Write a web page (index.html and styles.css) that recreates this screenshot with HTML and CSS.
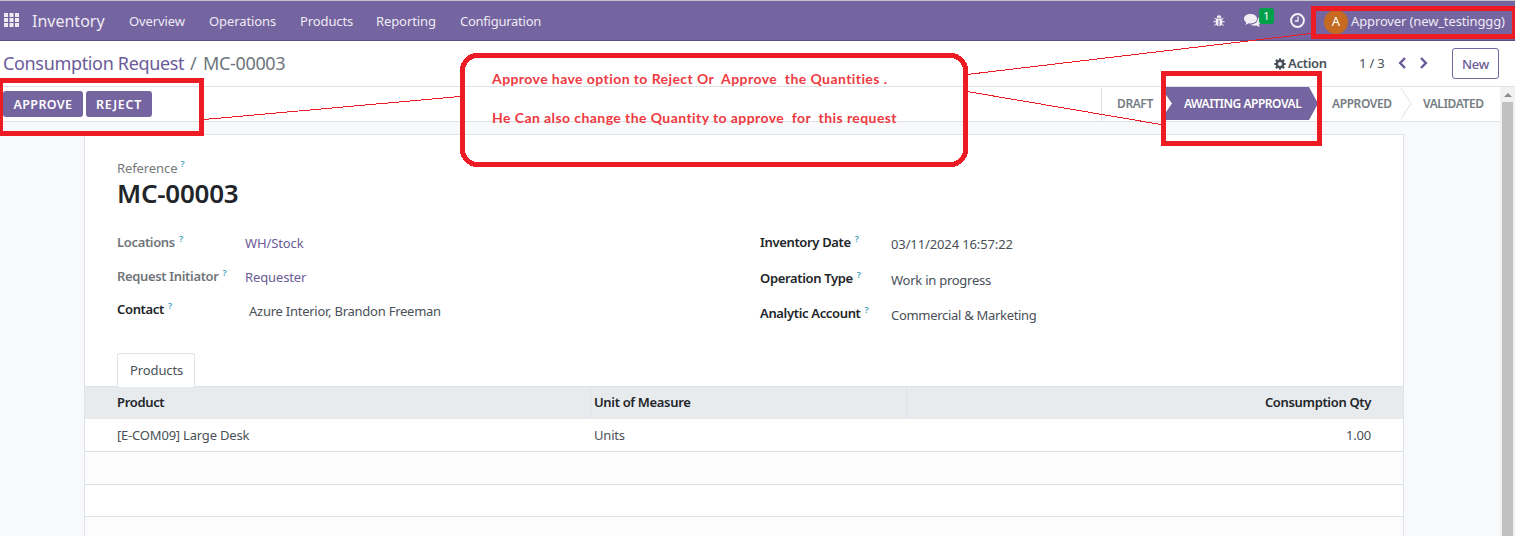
FILE: index.html
```html
<!DOCTYPE html>
<html lang="en">
<head>
<meta charset="utf-8">
<title>Consumption Request / MC-00003</title>
<link rel="stylesheet" href="styles.css">
</head>
<body>
<header class="navbar">
  <svg class="apps" width="15" height="14" viewBox="0 0 15 14"><path fill="#eeebf3" d="M0 0h4v4H0zM5.5 0h4v4h-4zM11 0h4v4h-4zM0 5h4v4H0zM5.5 5h4v4h-4zM11 5h4v4h-4zM0 10h4v4H0zM5.5 10h4v4h-4zM11 10h4v4h-4z"/></svg>
  <span class="brand">Inventory</span>
  <nav class="menu">
    <span class="m-over">Overview</span><span class="m-oper">Operations</span><span class="m-prod">Products</span><span class="m-rep">Reporting</span><span class="m-conf">Configuration</span>
  </nav>
  <div class="systray">
    <svg class="bug" width="12" height="12" viewBox="0 0 12 12"><path fill="#f3f0f7" d="M3.6 2.7a2.4 2.4 0 0 1 4.8 0zM2.8 3.5h6.4v5.2q-.4 2.2-2.7 2.5V5h-1v6.200Q3.200 10.900 2.800 8.700z"/><path fill="none" stroke="#f3f0f7" d="M3.300 4.800 1.400 2.800M8.700 4.800l1.900-2M3 6.700H.3M9 6.700h2.700M3.300 8.500l-2 2.200M8.700 8.500l2 2.200"/></svg>
    <svg class="chat" width="17" height="14" viewBox="0 0 17 14"><path fill="#f0edf4" d="M6.500 0C10.200 0 13 2 13 4.700S10.200 9.400 6.500 9.400q-1 0-1.800-.2-1.600 1.300-3.700 1.500 1.200-1 1.300-2.300C.9 7.500 0 6.200 0 4.700 0 2 2.800 0 6.500 0zM14 3.400c1.800.8 3 2.200 3 3.900 0 1.400-.8 2.600-2.200 3.500q.1 1.400 1.300 2.200-2.200-.1-3.700-1.400-3.700.6-6.200-1.200C10.800 10.500 14.200 8 14 3.400z"/></svg>
    <span class="badge">1</span>
    <svg class="clock" width="15" height="15" viewBox="0 0 15 15"><circle cx="7.500" cy="7.500" r="6.400" fill="none" stroke="#f3f0f7" stroke-width="2"/><path fill="none" stroke="#f3f0f7" stroke-width="1.300" d="M8 3.500V8H4.800"/></svg>
    <span class="avatar">A</span>
    <span class="user">Approver (new_testinggg)</span>
  </div>
</header>

<section class="control">
  <div class="crumbs"><span class="crumb-link">Consumption Request</span><span class="slash">/</span><span class="crumb-now">MC-00003</span></div>
  <div class="actions">
    <svg class="gear" width="12" height="12" viewBox="0 0 12 12"><circle cx="6" cy="6" r="3.100" fill="none" stroke="#495057" stroke-width="2.400"/><path stroke="#495057" stroke-width="2.200" d="M6 .3v2M6 9.700v2M.3 6h2M9.700 6h2M1.900 1.900l1.500 1.500M8.600 8.600l1.500 1.500M1.900 10.100l1.500-1.500M8.600 3.400l1.500-1.500"/></svg>
    <span class="action-label">Action</span>
    <span class="pager">1 / 3</span>
    <svg class="prev" width="9" height="12" viewBox="0 0 9 12"><path d="M7 1 2.200 6 7 11"/></svg>
    <svg class="next" width="9" height="12" viewBox="0 0 9 12"><path d="m2 1 4.800 5L2 11"/></svg>
    <button class="new">New</button>
  </div>
</section>

<div class="view">
  <main class="content">
    <section class="statusbar">
      <button class="primary approve">APPROVE</button>
      <button class="primary reject">REJECT</button>
      <div class="stages">
        <span class="stage draft">DRAFT</span>
        <span class="stage current">AWAITING APPROVAL</span>
        <span class="stage approved">APPROVED</span>
        <svg class="divider" width="12" height="33" viewBox="0 0 12 33"><path fill="none" stroke="#dee2e6" d="M1 1 11 16.500 1 32"/></svg>
        <span class="stage validated">VALIDATED</span>
      </div>
    </section>
    <article class="sheet">
      <div class="ref-label"><span>Reference</span><sup>?</sup></div>
      <h1>MC-00003</h1>
      <div class="groups">
        <dl class="group left">
          <dt class="muted loc"><span>Locations</span><sup>?</sup></dt><dd class="link wh">WH/Stock</dd>
          <dt class="muted init"><span>Request Initiator</span><sup>?</sup></dt><dd class="link reqr">Requester</dd>
          <dt class="cont"><span>Contact</span><sup>?</sup></dt><dd class="azure">Azure Interior, Brandon Freeman</dd>
        </dl>
        <dl class="group right">
          <dt class="invd"><span>Inventory Date</span><sup>?</sup></dt><dd class="date">03/11/2024 16:57:22</dd>
          <dt class="opt"><span>Operation Type</span><sup>?</sup></dt><dd class="work">Work in progress</dd>
          <dt class="ana"><span>Analytic Account</span><sup>?</sup></dt><dd class="comm">Commercial &amp; Marketing</dd>
        </dl>
      </div>
      <div class="tabs"><span class="tab">Products</span></div>
      <div class="table">
        <div class="tr head"><span class="h-prod">Product</span><span class="h-uom">Unit of Measure</span><span class="h-qty">Consumption Qty</span></div>
        <div class="tr row"><span class="c-prod">[E-COM09] Large Desk</span><span class="c-uom">Units</span><span class="c-qty">1.00</span></div>
        <div class="tr blank shade"></div>
        <div class="tr blank short"></div>
        <div class="tr blank shade"></div>
      </div>
    </article>
  </main>
  <aside class="scrollbar"><i class="up"></i><i class="thumb"></i></aside>
</div>

<svg class="marks" width="1515" height="536" viewBox="0 0 1515 536" shape-rendering="crispEdges">
  <g fill="none" stroke="#ed1c24" stroke-width="5">
    <rect x=".5" y="80.500" width="201" height="53"/>
    <rect x="1313.500" y="8.500" width="200.500" height="28"/>
    <rect x="1163.500" y="73.500" width="156" height="70"/>
    <rect x="462.500" y="55.500" width="503" height="109" rx="15"/>
  </g>
  <path fill="none" stroke="#ed1c24" d="M204 119.500 460 96.500M967 74.500 1311 33.500M967 91.500l194 33"/>
</svg>
<div class="note"><p class="n1">Approve have option to Reject Or&nbsp; Approve&nbsp; the Quantities .</p><p class="n2">He Can also change the Quantity to approve&nbsp; for&nbsp; this request</p></div>
</body>
</html>
```
FILE: styles.css
```css
* { box-sizing: border-box; }
body { margin: 0; width: 1515px; height: 536px; overflow: hidden; position: relative; background: #fff; color: #495057; font: 13px/20px "Noto Sans", "Open Sans", sans-serif; display: flex; flex-direction: column; white-space: nowrap; }
p, h1, dl, dd { margin: 0; }
button { font: inherit; padding: 0; border: 0; display: block; }
svg { display: block; flex: none; }
span { flex: none; }

.navbar { height: 41px; flex: none; display: flex; align-items: flex-start; background: #74649f; border-top: 1px solid #c4c2cb; border-bottom: 1px solid #5c4d80; color: #eeebf4; padding: 0 0 0 4px; }
.apps { margin: 12px 13px 0 0; }
.brand { width: 97px; font-size: 16px; line-height: 24px; margin-top: 8px; }
.menu { display: grid; grid-template-columns: 80px 91px 76px 84px 90px; margin-top: 10px; letter-spacing: -.1px; }
.m-conf { letter-spacing: -.25px; }
.systray { margin-left: auto; display: flex; align-items: flex-start; }
.bug { margin: 14px 19px 0 0; }
.chat { margin: 13px 0 0; }
.badge { width: 15px; height: 16px; margin: 7px 16px 0 -2px; border-radius: 3px; background: #00a04a; color: #fff; font-size: 11px; line-height: 15px; text-align: center; }
.clock { margin: 12px 19px 0 0; }
.avatar { width: 24px; height: 24px; margin: 9px 3px 0 0; border-radius: 50%; background: #c56a20; color: #fff; text-align: center; line-height: 23px; }
.user { width: 164px; margin-top: 10px; letter-spacing: -.13px; }

.control { height: 46px; flex: none; display: flex; justify-content: space-between; border-bottom: 1px solid #dee2e6; padding: 0 16px 0 3px; }
.crumbs { display: flex; font-size: 18px; line-height: 26px; margin-top: 9px; letter-spacing: -.34px; }
.crumb-link { width: 187px; color: #6b5b98; }
.slash { width: 13px; }
.slash, .crumb-now { color: #6c757d; }
.actions { display: flex; align-items: flex-start; }
.gear { margin: 17px 2px 0 0; }
.action-label { width: 71px; margin-top: 12px; font-weight: 600; color: #495057; letter-spacing: -.3px; }
.pager { width: 39px; margin-top: 12px; letter-spacing: -.2px; }
.prev, .next { margin-top: 16px; fill: none; stroke: #6b5b98; stroke-width: 2.500; }
.next { margin-left: 12px; }
.new { width: 47px; height: 31px; margin: 7px 0 0 24px; border: 1px solid #74649f; border-radius: 3px; background: #fff; color: #6b5b98; font-weight: 500; letter-spacing: -.2px; }

.view { height: 449px; display: flex; }
.content { width: 1500px; background: #f8f9fa; }
.statusbar { height: 35px; display: flex; align-items: flex-start; background: #fff; border-bottom: 1px solid #dee2e6; padding-left: 3px; }
.primary { height: 26px; margin: 4px 3px 0 0; border-radius: 3px; background: #74649f; color: #fff; font-size: 12.500px; font-weight: 600; line-height: 25px; letter-spacing: .35px; }
.approve { width: 80px; }
.reject { width: 66px; letter-spacing: .75px; }
.stages { margin-left: auto; display: flex; height: 34px; font-size: 12px; font-weight: 600; line-height: 33px; color: #757c83; letter-spacing: -.4px; }
.draft { width: 64px; border-left: 1px solid #dee2e6; padding-left: 15px; margin-top: 1px; line-height: 31px; }
.current { width: 153px; height: 33px; padding-left: 19px; background: #74649f; color: #fff; letter-spacing: -.47px; clip-path: polygon(0 0, 144px 0, 153px 50%, 144px 100%, 0 100%, 0 80%, 7px 50%, 0 20%); }
.approved { width: 82px; padding-left: 14px; }
.validated { width: 88px; padding-left: 11px; }

.sheet { width: 1320px; height: 414px; margin: 12px 0 0 84px; background: #fff; border: 1px solid #dee2e6; border-bottom: 0; }
.ref-label { display: flex; padding: 23px 0 0 32px; color: #75797c; letter-spacing: -.1px; }
sup { font-size: 9px; line-height: 12px; font-weight: 600; color: #3aa0bd; margin-left: 3px; }
dt sup { line-height: 14px; margin-left: 4px; }
h1 { padding-left: 32px; font-size: 26px; line-height: 31px; height: 32px; font-weight: 600; color: #212529; letter-spacing: -.25px; }
.groups { display: flex; padding: 22px 0 0 32px; height: 143px; }
.group { display: grid; align-content: start; }
.left { width: 643px; grid-template-columns: 128px auto; grid-template-rows: 34px 33px 34px; }
.right { grid-template-columns: 131px auto; grid-template-rows: 36px 35px 34px; }
dt { display: flex; font-weight: 600; color: #212529; letter-spacing: -.34px; }
dt.muted { color: #70757a; }
dd { padding-top: 1px; }
.right dd, .azure { padding-top: 2px; }
.azure { padding-left: 4px; letter-spacing: -.25px; }
.link, .date { letter-spacing: -.12px; }
.work { letter-spacing: -.25px; }
.comm { letter-spacing: -.3px; }
.link { color: #6b5b98; }
.tabs { height: 34px; padding-left: 32px; border-bottom: 1px solid #dee2e6; }
.tab { display: block; width: 78px; height: 34px; padding: 6px 0 0 12px; border: 1px solid #dee2e6; border-bottom: 0; border-radius: 3px 3px 0 0; background: #fff; position: relative; letter-spacing: -.1px; }

.tr { display: grid; grid-template-columns: 506px 316px 464px; height: 33px; border-bottom: 1px solid #dee2e6; }
.tr > span { padding-top: 6px; letter-spacing: -.2px; }
.head { height: 32px; background: #e8ebee; font-weight: 600; color: #212529; border-bottom-color: #e8ebee; }
.tr.head > span { padding-top: 5px; border-right: 1px solid #dee2e6; letter-spacing: -.34px; }
.h-prod, .c-prod { padding-left: 32px; }
.h-uom, .c-uom { padding-left: 3px; }
.tr.head .h-qty { border-right: 0; }
.h-qty, .c-qty { text-align: right; }
.short { height: 32px; }
.shade { background: #fcfcfc; }

.scrollbar { width: 15px; background: #f1f1f1; display: flex; flex-direction: column; align-items: center; }
.up { border: 4px solid transparent; border-top: 0; border-bottom: 4px solid #8b8b8b; margin: 6px 0 5px; }
.thumb { width: 11px; flex: 1; background: #c1c1c1; }

.marks { position: absolute; left: 0; top: 0; }
.note { position: absolute; left: 492px; top: 69px; color: #ee3a42; font: 700 14px/20px Lato, "Open Sans", sans-serif; letter-spacing: .42px; }
.n2 { margin-top: 19px; }
```
